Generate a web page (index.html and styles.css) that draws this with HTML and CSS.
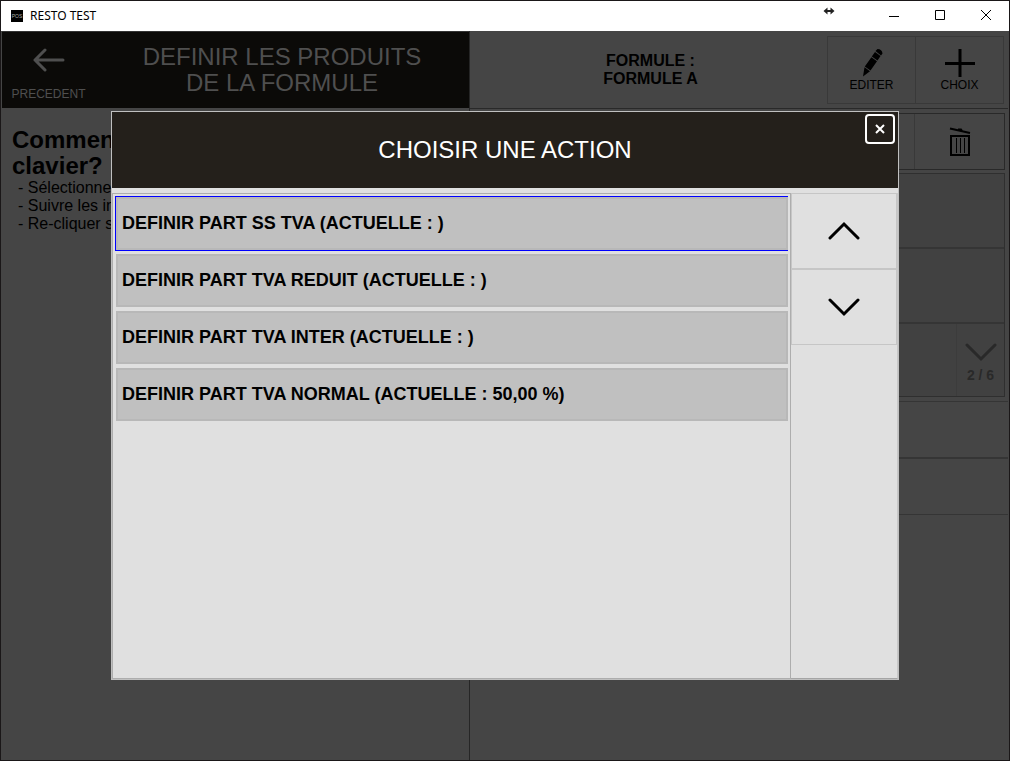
FILE: index.html
```html
<!DOCTYPE html>
<html lang="fr">
<head>
    <meta charset="UTF-8">
    <meta name="viewport" content="width=device-width, initial-scale=1.0">
    <title>RESTO TEST</title>
    <link rel="stylesheet" href="styles.css">
</head>
<body>

<div class="window">
    <header class="titlebar">
        <span class="app-icon">POS</span>
        <span class="app-name">RESTO TEST</span>
        <svg class="resize-icon" width="12" height="8" viewBox="0 0 12 8"><path d="M3 4h6" stroke="#222" stroke-width="2"/><path d="M0.500 4L4.500 0.500v7zM11.500 4L7.500 0.500v7z" fill="#222"/></svg>
        <div class="window-buttons">
            <button type="button" aria-label="Réduire"><svg width="12" height="12" viewBox="0 0 12 12"><path d="M1 6.500h10" stroke="#000"/></svg></button>
            <button type="button" aria-label="Agrandir"><svg width="12" height="12" viewBox="0 0 12 12"><path d="M1.500 0.500h9v9h-9z" fill="none" stroke="#000"/></svg></button>
            <button type="button" aria-label="Fermer la fenêtre"><svg width="12" height="12" viewBox="0 0 12 12"><path d="M1 0l10 10M11 0L1 10" stroke="#000"/></svg></button>
        </div>
    </header>

    <main class="content">
        <section class="left">
            <div class="page-header">
                <button type="button" class="back">
                    <svg width="32" height="24" viewBox="0 0 32 24"><path d="M12 2L2 12l10 10M2 12h28" fill="none" stroke="#4f4f4f" stroke-width="3" stroke-linecap="round" stroke-linejoin="round"/></svg>
                    <span>PRECEDENT</span>
                </button>
                <h1>DEFINIR LES PRODUITS<br>DE LA FORMULE</h1>
            </div>
            <div class="help">
                <h2>Comment<br>clavier?</h2>
                <ul>
                    <li>- Sélectionner</li>
                    <li>- Suivre les instructions</li>
                    <li>- Re-cliquer sur</li>
                </ul>
            </div>
        </section>

        <section class="right">
            <div class="formula-header">
                <h2>FORMULE :<br>FORMULE A</h2>
                <div class="tools">
                    <button type="button">
                        <svg width="24" height="30" viewBox="0 0 24 30"><path d="M15.500 3L17.500 1q4.500 0 5 4.500l-1.500 2zM15 4l5.500 4-3 4.500-5.700-4zM11.400 9.200l5.600 4-6.500 9.300-5.700-4zM4.500 19.300l5.500 4L3 28.500z" fill="#000"/></svg>
                        <span>EDITER</span>
                    </button>
                    <button type="button">
                        <svg width="32" height="30" viewBox="0 0 32 30"><path d="M16 1v28M1 15.500h30" stroke="#000" stroke-width="3"/></svg>
                        <span>CHOIX</span>
                    </button>
                </div>
            </div>
            <div class="toolbar">
                <button type="button" class="trash" aria-label="Supprimer">
                    <svg width="22" height="30" viewBox="0 0 22 30"><path d="M2 9h18v19H2z" fill="none" stroke="#000" stroke-width="2"/><path d="M7.500 11v15M11.500 11v15M15.500 11v15" stroke="#000"/><path d="M1 1.500L21 6M9 2.500l3 0 1 1.500" fill="none" stroke="#000" stroke-width="2"/></svg>
                </button>
            </div>
            <div class="slots">
                <div class="slot"></div>
                <div class="slot"></div>
                <div class="slot">
                    <button type="button" class="pager">
                        <svg width="32" height="20" viewBox="0 0 32 20"><path d="M2 3l14 14L30 3" fill="none" stroke="#292929" stroke-width="3" stroke-linecap="round"/></svg>
                        <span>2 / 6</span>
                    </button>
                </div>
            </div>
            <div class="line"></div>
            <div class="line"></div>
        </section>
    </main>
</div>

<div class="overlay">
    <div class="dialog" role="dialog" aria-labelledby="dialog-title">
        <div class="dialog-header">
            <h2 id="dialog-title">CHOISIR UNE ACTION</h2>
            <button type="button" class="close" aria-label="Fermer"><svg width="10" height="10" viewBox="0 0 10 10"><path d="M1 1l8 8M9 1L1 9" stroke="#fff" stroke-width="2"/></svg></button>
        </div>
        <div class="dialog-body">
            <div class="actions">
                <button type="button" class="action selected">DEFINIR PART SS TVA (ACTUELLE : )</button>
                <button type="button" class="action">DEFINIR PART TVA REDUIT (ACTUELLE : )</button>
                <button type="button" class="action">DEFINIR PART TVA INTER (ACTUELLE : )</button>
                <button type="button" class="action">DEFINIR PART TVA NORMAL (ACTUELLE : 50,00 %)</button>
            </div>
            <div class="scroll">
                <button type="button" aria-label="Monter"><svg width="32" height="20" viewBox="0 0 32 20"><path d="M2 17L16 3l14 14" fill="none" stroke="#000" stroke-width="3" stroke-linecap="round"/></svg></button>
                <button type="button" aria-label="Descendre"><svg width="32" height="20" viewBox="0 0 32 20"><path d="M2 3l14 14L30 3" fill="none" stroke="#000" stroke-width="3" stroke-linecap="round"/></svg></button>
            </div>
        </div>
    </div>
</div>

</body>
</html>
```
FILE: styles.css
```css
* {
    box-sizing: border-box;
}
body {
    margin: 0;
    font-family: "Liberation Sans", Arial, sans-serif;
    color: #000;
}
h1, h2, ul {
    margin: 0;
    padding: 0;
}
button {
    margin: 0;
    padding: 0;
    border: 0;
    background: none;
    font-family: inherit;
    color: inherit;
}
svg {
    display: block;
}

/* window */
.window {
    display: flex;
    flex-direction: column;
    height: 100vh;
    border: 1px solid #1a1718;
    background-color: #454545;
}
.titlebar {
    display: flex;
    align-items: center;
    height: 30px;
    padding-left: 10px;
    background-color: #fff;
}
.app-icon {
    width: 12px;
    height: 12px;
    background-color: #000;
    color: #aaa;
    font-size: 5px;
    line-height: 12px;
    text-align: center;
}
.app-name {
    margin-left: 7px;
    font-family: "Noto Sans", "Open Sans", sans-serif;
    font-size: 12px;
    line-height: 16px;
}
.resize-icon {
    margin-left: auto;
    margin-right: 36px;
    margin-bottom: 10px;
}
.window-buttons {
    display: flex;
}
.window-buttons button {
    display: grid;
    place-items: center;
    width: 46px;
    height: 30px;
}
.content {
    flex: 1;
    display: grid;
    grid-template-columns: 467px 1fr;
    padding: 0 1px;
}

/* left column */
.page-header {
    display: flex;
    height: 77px;
    border-top: 1px solid #333;
    background-color: #0b0a08;
    color: #4f4f4f;
}
.back {
    display: flex;
    flex-direction: column;
    align-items: center;
    justify-content: space-between;
    width: 93px;
    padding: 16px 0 7px;
    font-size: 12px;
    line-height: 14px;
}
.page-header h1 {
    flex: 1;
    padding: 12px 0;
    font-size: 24px;
    line-height: 26px;
    font-weight: normal;
    text-align: center;
}
.help {
    padding: 19px 10px;
}
.help h2 {
    font-size: 24px;
    line-height: 26px;
}
.help ul {
    padding-left: 6px;
    list-style: none;
    font-size: 16px;
    line-height: 18px;
}

/* right column */
.right {
    border-left: 1px solid #262626;
}
.formula-header {
    display: flex;
    align-items: center;
    height: 78px;
    padding: 0 4px;
    border-bottom: 1px solid #292929;
}
.formula-header h2 {
    flex: 1;
    font-size: 16px;
    line-height: 18px;
    text-align: center;
}
.tools {
    display: grid;
    grid-template-columns: 87px 88px;
    border: 1px solid #393939;
}
.tools button {
    display: flex;
    flex-direction: column;
    align-items: center;
    height: 66px;
    padding-top: 11px;
    font-size: 12px;
    line-height: 14px;
}
.tools button + button {
    border-left: 1px solid #393939;
}
.toolbar {
    display: flex;
    justify-content: flex-end;
    height: 57px;
    margin: 4px 3px 3px 4px;
    border: 1px solid #292929;
}
.trash {
    display: grid;
    place-items: center;
    width: 90px;
    border-left: 1px solid #393939;
}
.slots {
    margin: 0 3px 4px 4px;
    border: 1px solid #2f2f2f;
    background-color: #414141;
}
.slot {
    display: flex;
    justify-content: flex-end;
    height: 75px;
    border-bottom: 2px solid #353535;
}
.slot:last-child {
    height: 72px;
    border-bottom: 0;
}
.pager {
    display: flex;
    flex-direction: column;
    align-items: center;
    gap: 6px;
    width: 48px;
    padding-top: 18px;
    border-left: 1px solid #3c3c3c;
    color: #292929;
    font-size: 14px;
    font-weight: bold;
    line-height: 14px;
}
.line {
    height: 57px;
    border-top: 1px solid #353535;
    border-bottom: 1px solid #353535;
}

/* dialog */
.overlay {
    position: fixed;
    inset: 31px 0 1px;
    display: grid;
    place-items: center;
}
.dialog {
    display: flex;
    flex-direction: column;
    width: 78%;
    height: 78%;
    border: 1px solid #c0c0c0;
    background-color: #e0e0e0;
}
.dialog-header {
    position: relative;
    display: grid;
    place-items: center;
    height: 76px;
    background-color: #24201b;
    color: #fff;
}
.dialog-header h2 {
    font-size: 24px;
    font-weight: normal;
}
.close {
    position: absolute;
    top: 2px;
    right: 3px;
    display: grid;
    place-items: center;
    width: 30px;
    height: 30px;
    border: 2px solid #fff;
    border-radius: 4px;
}
.dialog-body {
    flex: 1;
    display: grid;
    grid-template-columns: 1fr 107px;
    margin-top: 5px;
}
.actions {
    display: flex;
    flex-direction: column;
    gap: 4px;
    padding: 3px 2px 3px 3px;
    border: 1px solid #adadad;
}
.action {
    height: 53px;
    padding-left: 4px;
    border: 2px solid #b8b8b8;
    background-color: #c0c0c0;
    font-size: 18px;
    font-weight: bold;
    text-align: left;
}
.selected {
    box-shadow: 0 -1px #00f, 0 1px #00f, -1px 0 #00f, -1px -1px #00f, -1px 1px #00f;
}
.scroll {
    border-bottom: 1px solid #a5a5a5;
    border-right: 1px solid #c8c8c8;
}
.scroll button {
    display: grid;
    place-items: center;
    width: 100%;
    height: 76px;
    border: 1px solid #c6c6c6;
}
```
